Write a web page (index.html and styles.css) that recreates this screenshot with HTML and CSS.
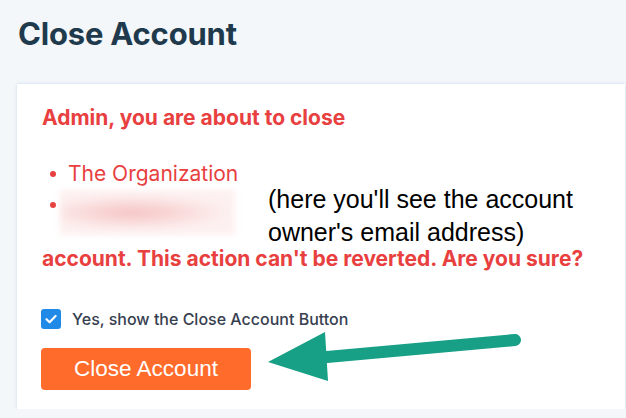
FILE: index.html
```html
<!DOCTYPE html>
<html lang="en">
<head>
    <meta charset="UTF-8">
    <meta name="viewport" content="width=device-width, initial-scale=1.0">
    <title>Close Account</title>
    <link rel="stylesheet" href="styles.css">
</head>
<body>
    <div class="page">
        <h1 class="page-title">Close Account</h1>

        <div class="card">
            <p class="warning">Admin, you are about to close</p>

            <ul class="target-list">
                <li class="target-item">The Organization</li>
                <li class="target-item">
                    <span class="blurred-email"></span>
                    <span class="note">(here you'll see the account owner's email address)</span>
                </li>
            </ul>

            <p class="warning">account. This action can't be reverted. Are you sure?</p>

            <label class="confirm">
                <span class="confirm-box">
                    <svg viewBox="0 0 20 20" width="20" height="20">
                        <path d="M5.5 10.2 L8.6 13.2 L14.6 7" fill="none" stroke="#fff" stroke-width="2.2" stroke-linecap="round" stroke-linejoin="round"/>
                    </svg>
                </span>
                Yes, show the Close Account Button
            </label>

            <button class="close-button">Close Account</button>

            <!-- annotation arrow drawn over the screenshot -->
            <svg class="pointer" viewBox="0 0 270 60" width="270" height="60">
                <line x1="62" y1="25" x2="250" y2="8" stroke="#17a086" stroke-width="12" stroke-linecap="round"/>
                <polygon points="3,30 60,0 63,49" fill="#17a086"/>
            </svg>
        </div>
    </div>
</body>
</html>
```

FILE: styles.css
```css
:root {
    --page-bg: #f3f7fa;
    --title-color: #1f3a4c;
    --danger: #e8403f;
    --orange: #ff6b2b;
    --blue: #2189e6;
}

* {
    margin: 0;
    padding: 0;
    box-sizing: border-box;
}

body {
    background-color: var(--page-bg);
    font-family: 'Inter', 'Liberation Sans', sans-serif;
}

.page {
    padding: 15px 1px 0 17px;
}

.page-title {
    font-size: 31px;
    font-weight: 700;
    color: var(--title-color);
    line-height: 38px;
    padding-left: 1px;
    letter-spacing: -0.2px;
}

.card {
    position: relative;
    margin-top: 31px;
    background: #fff;
    box-shadow: 0 0 3px rgba(160, 195, 225, 0.55);
    padding: 22px 25px 19px 25px;
}

.warning {
    color: var(--danger);
    font-size: 21px;
    font-weight: 700;
    line-height: 24px;
}

.target-list {
    list-style: none;
    margin: 31px 0 -2px 0;
}

.target-item {
    display: flex;
    align-items: flex-start;
    color: var(--danger);
    font-size: 21px;
    line-height: 26px;
    padding-left: 26px;
    position: relative;
}

.target-item::before {
    content: '';
    position: absolute;
    left: 8px;
    top: 10px;
    width: 6px;
    height: 6px;
    border-radius: 50%;
    background: var(--danger);
}

.target-item + .target-item {
    margin-top: 2px;
}

.target-item + .target-item::before {
    top: 13px;
}

.blurred-email {
    display: block;
    width: 175px;
    height: 45px;
    margin-left: -8px;
    margin-top: 1px;
    background:
        radial-gradient(ellipse 55% 40% at 42% 50%, rgba(240, 160, 160, 0.55), rgba(255, 255, 255, 0) 100%),
        rgba(252, 228, 228, 0.55);
    filter: blur(3px);
}

.note {
    width: 330px;
    margin-left: 33px;
    margin-top: -6px;
    font-family: 'Liberation Sans', Arial, sans-serif;
    font-size: 25px;
    line-height: 33px;
    color: #000;
}

.confirm {
    display: flex;
    align-items: center;
    gap: 11px;
    margin-top: 38px;
    font-size: 16px;
    font-weight: 500;
    color: #374050;
}

.confirm-box {
    display: block;
    width: 20px;
    height: 20px;
    border-radius: 3px;
    background: var(--blue);
    margin-left: -1px;
}

.confirm-box svg {
    display: block;
}

.close-button {
    display: block;
    margin-top: 19px;
    margin-left: -1px;
    width: 210px;
    height: 42px;
    background: var(--orange);
    color: #fff;
    border: none;
    border-radius: 4px;
    font-family: 'Liberation Sans', Arial, sans-serif;
    font-size: 22.5px;
}

.pointer {
    position: absolute;
    left: 248px;
    top: 248px;
}
```
